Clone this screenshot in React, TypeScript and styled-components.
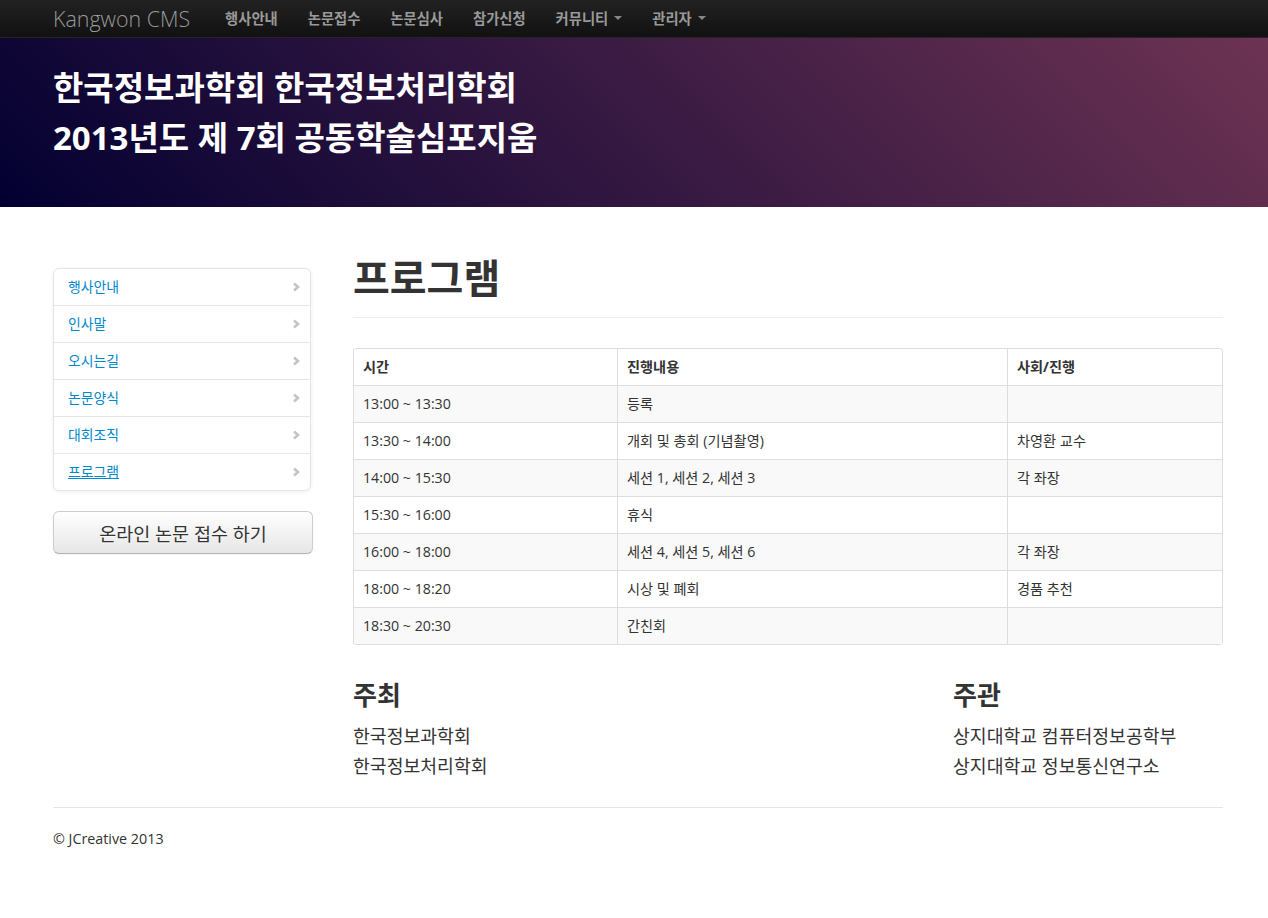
import React from "react";
import styled, { createGlobalStyle } from "styled-components";

const GlobalStyle = createGlobalStyle`
  html, body { margin: 0; padding: 0; background: #fff; }
  body {
    font-family: "Open Sans", "Noto Sans CJK KR", sans-serif;
    font-size: 14.2px;
    line-height: 20px;
    color: #333;
  }
  * { box-sizing: border-box; }
`;

const Navbar = styled.div`
  height: 38px;
  background: linear-gradient(#222222, #111111);
  border-bottom: 1px solid #252525;
`;

const Container = styled.div`
  width: 1178px;
  padding-left: 8px;
  margin: 0 auto;
`;

const NavInner = styled(Container)`
  display: flex;
  align-items: center;
  height: 37px;
`;

const Brand = styled.a`
  font-family: "Open Sans", sans-serif;
  font-weight: 300;
  font-size: 21.4px;
  color: #999;
  text-decoration: none;
  padding-right: 20px;
  line-height: 37px;
`;

const NavItem = styled.a`
  display: flex;
  align-items: center;
  gap: 6px;
  padding: 0 15px;
  font-size: 14.3px;
  font-weight: 700;
  color: #9a9a9a;
  text-decoration: none;
  line-height: 37px;
`;

const Caret = styled.span`
  display: inline-block;
  width: 0;
  height: 0;
  border-top: 4px solid #888;
  border-left: 4px solid transparent;
  border-right: 4px solid transparent;
  margin-top: -2px;
`;

const Masthead = styled.div`
  background: linear-gradient(45deg, #020031 0%, #6d3353 100%);
  padding: 25px 0 44px;
`;

const MastTitle = styled.h1`
  margin: 0;
  color: #fff;
  font-size: 33px;
  font-weight: 700;
  line-height: 50px;
`;

const Row = styled(Container)`
  display: flex;
  gap: 40px;
  padding-top: 50px;
`;

const Sidebar = styled.div`
  width: 260px;
  flex-shrink: 0;
  margin-top: 11px;
`;

const SideNav = styled.ul`
  list-style: none;
  margin: 0;
  padding: 0;
  width: 258px;
  background: #fff;
  border: 1px solid #e5e5e5;
  border-radius: 6px;
  box-shadow: 0 1px 4px rgba(0, 0, 0, 0.065);
`;

const SideItem = styled.li<{ $first?: boolean }>`
  border-top: ${(p) => (p.$first ? "none" : "1px solid #e5e5e5")};
`;

const SideLink = styled.a<{ $active?: boolean }>`
  display: flex;
  justify-content: space-between;
  align-items: center;
  height: 36px;
  padding: 0 10px 0 14px;
  color: #0088cc;
  font-size: 13.9px;
  text-decoration: ${(p) => (p.$active ? "underline" : "none")};
`;

const BigButton = styled.button`
  display: block;
  width: 260px;
  height: 43px;
  margin-top: 20px;
  font-family: "Open Sans", "Noto Sans CJK KR", sans-serif;
  font-size: 18.5px;
  color: #333;
  background: linear-gradient(#ffffff, #e6e6e6);
  border: 1px solid #cccccc;
  border-bottom-color: #b3b3b3;
  border-radius: 6px;
  box-shadow: inset 0 1px 0 rgba(255, 255, 255, 0.2), 0 1px 2px rgba(0, 0, 0, 0.05);
  text-shadow: 0 1px 1px rgba(255, 255, 255, 0.75);
`;

const Main = styled.div`
  width: 870px;
`;

const PageHeader = styled.div`
  padding-bottom: 18px;
  border-bottom: 1px solid #eeeeee;
`;

const PageTitle = styled.h1`
  margin: 0;
  font-size: 40px;
  line-height: 42px;
  font-weight: 700;
  color: #333;
`;

const Table = styled.table`
  width: 100%;
  margin-top: 30px;
  border-collapse: separate;
  border-spacing: 0;
  border: 1px solid #dddddd;
  border-left: 0;
  border-radius: 4px;
  font-size: 14.2px;
  line-height: 20px;
`;

const Th = styled.th<{ $w?: number }>`
  text-align: left;
  font-weight: 700;
  padding: 8px 9px;
  width: ${(p) => (p.$w ? `${p.$w}px` : "auto")};
  border-left: 1px solid #dddddd;
`;

const Tr = styled.tr<{ $striped?: boolean }>`
  background: ${(p) => (p.$striped ? "#f9f9f9" : "#fff")};
`;

const Td = styled.td`
  padding: 8px 9px;
  border-top: 1px solid #dddddd;
  border-left: 1px solid #dddddd;
  vertical-align: top;
  height: 37px;
`;

const Columns = styled.div`
  display: grid;
  grid-template-columns: 600px 270px;
  margin-top: 30px;
`;

const SubHead = styled.h3`
  margin: 0 0 6px;
  font-size: 26px;
  line-height: 40px;
  font-weight: 700;
  color: #333;
`;

const Line = styled.div`
  font-size: 18.3px;
  line-height: 30px;
  color: #333;
`;

const Footer = styled(Container)`
  padding: 0 0 40px 8px;
`;

const FooterInner = styled.div`
  margin-top: 26px;
  border-top: 1px solid #e5e5e5;
  padding-top: 21px;
  font-size: 14.3px;
  line-height: 20px;
`;

const Chevron = () => (
  <svg width="8" height="10" viewBox="0 0 8 10">
    <polyline points="2,1.5 6,5 2,8.5" fill="none" stroke="#c4c4c4" strokeWidth="2.6" />
  </svg>
);

const sideItems = ["행사안내", "인사말", "오시는길", "논문양식", "대회조직", "프로그램"];

const rows: [string, string, string][] = [
  ["13:00 ~ 13:30", "등록", ""],
  ["13:30 ~ 14:00", "개회 및 총회 (기념촬영)", "차영환 교수"],
  ["14:00 ~ 15:30", "세션 1, 세션 2, 세션 3", "각 좌장"],
  ["15:30 ~ 16:00", "휴식", ""],
  ["16:00 ~ 18:00", "세션 4, 세션 5, 세션 6", "각 좌장"],
  ["18:00 ~ 18:20", "시상 및 폐회", "경품 추천"],
  ["18:30 ~ 20:30", "간친회", ""],
];

export default function App() {
  return (
    <>
      <GlobalStyle />
      <Navbar>
        <NavInner>
          <Brand>Kangwon CMS</Brand>
          <NavItem>행사안내</NavItem>
          <NavItem>논문접수</NavItem>
          <NavItem>논문심사</NavItem>
          <NavItem>참가신청</NavItem>
          <NavItem>
            커뮤니티 <Caret />
          </NavItem>
          <NavItem>
            관리자 <Caret />
          </NavItem>
        </NavInner>
      </Navbar>
      <Masthead>
        <Container>
          <MastTitle>
            한국정보과학회 한국정보처리학회
            <br />
            2013년도 제 7회 공동학술심포지움
          </MastTitle>
        </Container>
      </Masthead>
      <Row>
        <Sidebar>
          <SideNav>
            {sideItems.map((s, i) => (
              <SideItem key={s} $first={i === 0}>
                <SideLink $active={s === "프로그램"}>
                  {s}
                  <Chevron />
                </SideLink>
              </SideItem>
            ))}
          </SideNav>
          <BigButton>온라인 논문 접수 하기</BigButton>
        </Sidebar>
        <Main>
          <PageHeader>
            <PageTitle>프로그램</PageTitle>
          </PageHeader>
          <Table>
            <thead>
              <tr>
                <Th $w={264}>시간</Th>
                <Th $w={390}>진행내용</Th>
                <Th>사회/진행</Th>
              </tr>
            </thead>
            <tbody>
              {rows.map((r, i) => (
                <Tr key={r[0]} $striped={i % 2 === 0}>
                  <Td>{r[0]}</Td>
                  <Td>{r[1]}</Td>
                  <Td>{r[2]}</Td>
                </Tr>
              ))}
            </tbody>
          </Table>
          <Columns>
            <div>
              <SubHead>주최</SubHead>
              <Line>한국정보과학회</Line>
              <Line>한국정보처리학회</Line>
            </div>
            <div>
              <SubHead>주관</SubHead>
              <Line>상지대학교 컴퓨터정보공학부</Line>
              <Line>상지대학교 정보통신연구소</Line>
            </div>
          </Columns>
        </Main>
      </Row>
      <Footer>
        <FooterInner>© JCreative 2013</FooterInner>
      </Footer>
    </>
  );
}
